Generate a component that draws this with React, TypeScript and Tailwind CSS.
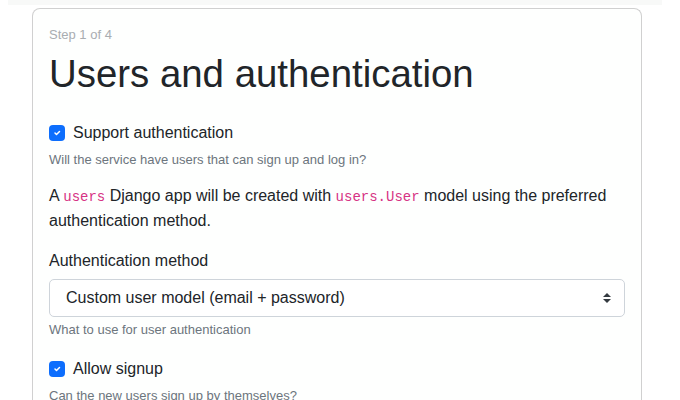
import React from "react";

function Check() {
  return (
    <span className="flex h-4 w-4 shrink-0 items-center justify-center rounded-[4px] bg-[#0d6efd]">
      <svg width="10" height="10" viewBox="0 0 20 20">
        <path d="M6 10l3 3l6-6" fill="none" stroke="#fff" strokeWidth="3" strokeLinecap="round" strokeLinejoin="round" />
      </svg>
    </span>
  );
}

export default function App() {
  return (
    <div className="h-[400px] overflow-hidden bg-white font-['Liberation_Sans',Arial,sans-serif] text-[#212529]">
      <div className="mx-[8px] h-[5px] w-[654px] bg-[#f8f9f8]" />
      <div className="ml-[32px] mt-[3px] w-[610px] rounded-t-[8px] border border-b-0 border-[#d0d0d0] bg-[#fefffe] px-4 pt-[16px] pb-4">
        <div className="text-[13px] leading-[20px] text-[#a9adb1]">Step 1 of 4</div>
        <h1 className="mt-[5px] text-[38.4px] leading-[48px] font-normal">Users and authentication</h1>
        <label className="mt-[23px] flex items-center gap-2">
          <Check />
          <span className="text-[16px] leading-[24px]">Support authentication</span>
        </label>
        <div className="mt-[5px] text-[13px] leading-[20px] text-[#6c757d]">
          Will the service have users that can sign up and log in?
        </div>
        <p className="mt-[14px] text-[16px] leading-[24px]">
          A <code className="font-['Liberation_Mono',monospace] text-[14px] text-[#d63384]">users</code> Django app will be
          created with <code className="font-['Liberation_Mono',monospace] text-[14px] text-[#d63384]">users.User</code>{" "}
          model using the preferred authentication method.
        </p>
        <div className="mt-[16px] text-[16px] leading-[24px]">Authentication method</div>
        <div className="mt-[6px] box-border flex h-[38px] items-center justify-between rounded-[5px] border border-[#ced4da] bg-white pl-[16px] pr-[12px]">
          <span className="text-[16px]">Custom user model (email + password)</span>
          <svg width="10" height="14" viewBox="0 0 10 14">
            <path d="M1 6L5 2L9 6Z" fill="#343a40" />
            <path d="M1 8L5 12L9 8Z" fill="#343a40" />
          </svg>
        </div>
        <div className="mt-[3px] text-[13px] leading-[20px] text-[#6c757d]">What to use for user authentication</div>
        <label className="mt-[17px] flex items-center gap-2">
          <Check />
          <span className="text-[16px] leading-[24px]">Allow signup</span>
        </label>
        <div className="mt-[5px] text-[13px] leading-[20px] text-[#6c757d]">Can the new users sign up by themselves?</div>
      </div>
    </div>
  );
}
